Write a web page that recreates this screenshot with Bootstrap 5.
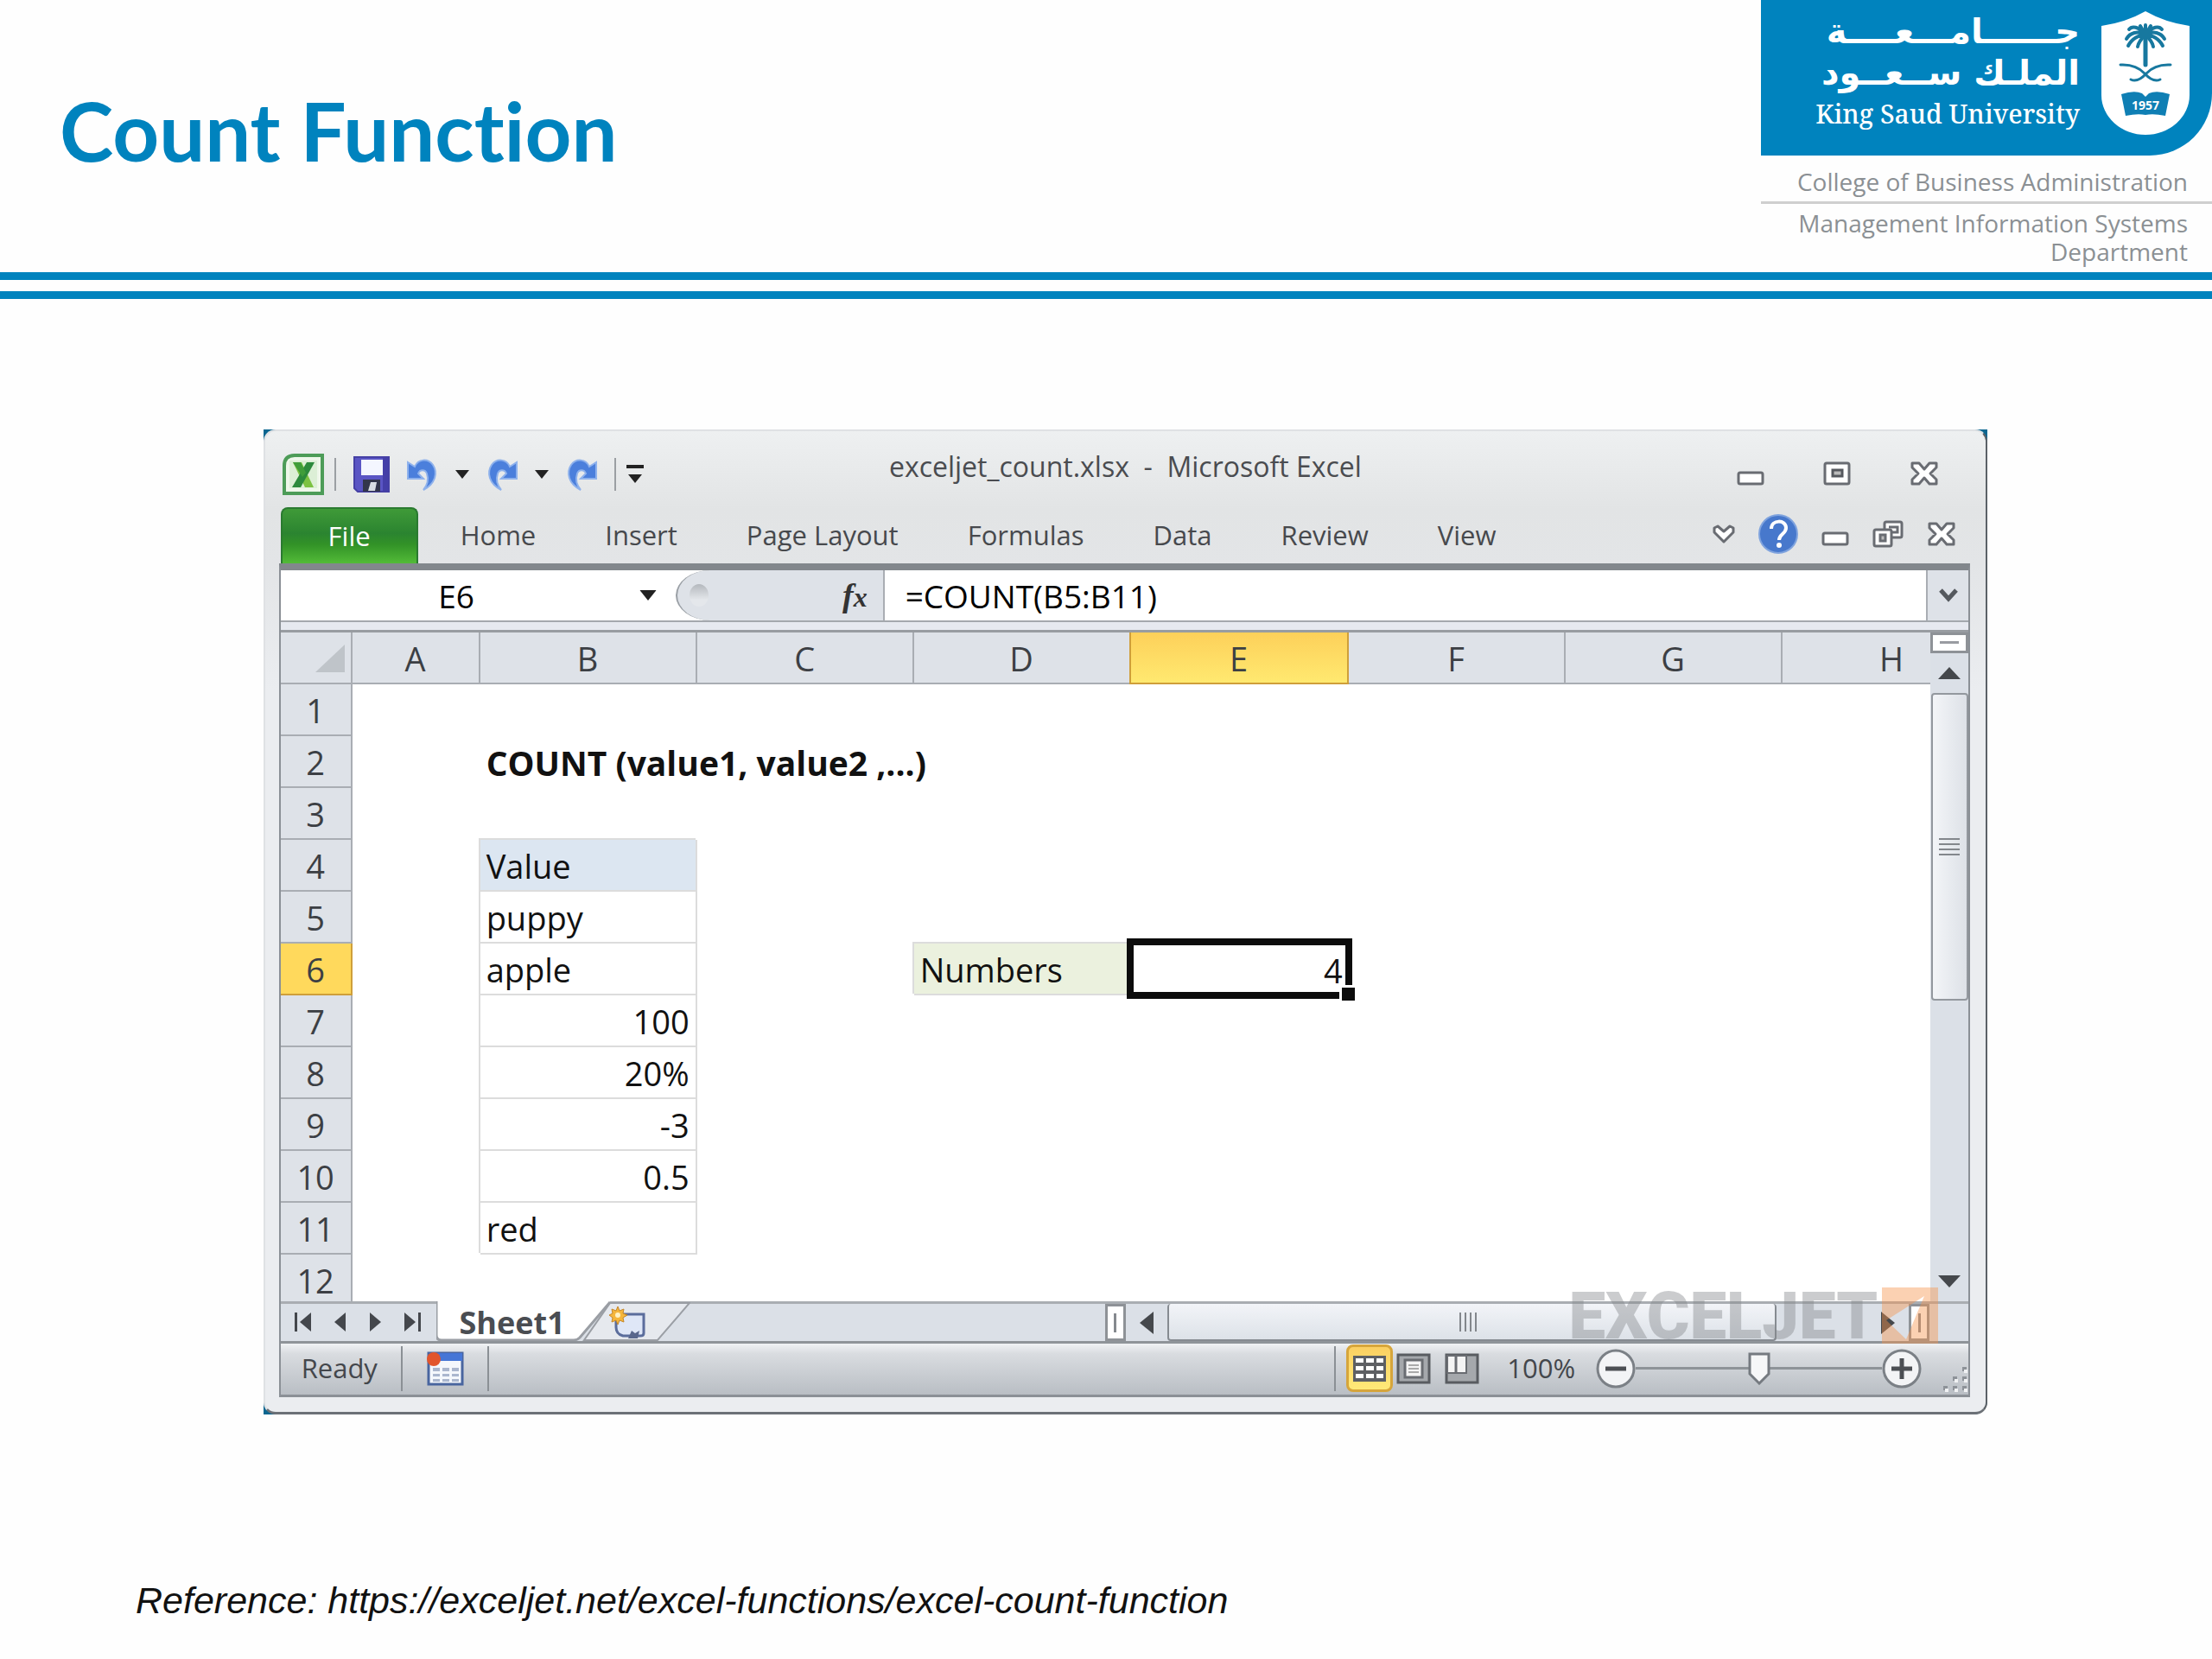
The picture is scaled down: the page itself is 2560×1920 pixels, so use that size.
<!DOCTYPE html>
<html lang="en">
  <head>
    <meta charset="utf-8">
    <meta name="viewport" content="width=device-width, initial-scale=1">
    <title>Count Function</title>
    <link href="https://cdn.jsdelivr.net/npm/bootstrap@5.3.3/dist/css/bootstrap.min.css" rel="stylesheet">
    <style>
      :root {
        --ksu-blue: #0083be;
        --head-bg: #dee2e8;
        --line: #a9adb3;
      }
      body {
        font-family: "Open Sans", "Noto Sans", sans-serif;
        background: #fefefe;
        color: #111;
      }

      /* slide header */
      .slide-title {
        font-family: Lato, sans-serif;
        font-weight: 700;
        font-size: 94px;
        line-height: 112px;
        font-variant-ligatures: none;
        color: var(--ksu-blue);
        padding: 95px 0 0 69px;
      }
      .slide-head { height: 315px; }
      .double-rule {
        height: 31px;
        border-top: 9px solid var(--ksu-blue);
        border-bottom: 9px solid var(--ksu-blue);
      }
      .uni-brand { width: 522px; }
      .uni-block {
        height: 180px;
        background: var(--ksu-blue);
        border-bottom-right-radius: 72px;
        padding: 12px 26px 0 0;
        gap: 25px;
      }
      .uni-arabic {
        font-family: "DejaVu Sans", sans-serif;
        font-weight: 700;
        font-size: 40px;
        line-height: 48px;
        white-space: nowrap;
      }
      .uni-name {
        font-family: "Noto Serif", "Liberation Serif", serif;
        font-weight: 500;
        font-size: 30px;
        line-height: 40px;
        margin-top: 4px;
      }
      .uni-unit {
        font-size: 28px;
        font-weight: 500;
        line-height: 33px;
        color: #8b9094;
        padding: 14px 28px 6px 0;
      }
      .uni-unit + .uni-unit { border-top: 3px solid #cfcfcf; padding-top: 6px; }

      /* Excel window */
      .slide-main { padding: 151px 10.15% 0 11.9%; }
      .win-back {
        background: #0b6690;
        border-bottom-right-radius: 16px;
      }
      .win {
        position: relative;
        background: linear-gradient(#eef0f1, #e2e4e5 90px, #e3e5e7 155px, #ebedf0 300px);
        border: 2px solid #dfe1e4;
        border-right-color: #5b6167;
        border-bottom: 3px solid #6c7177;
        border-radius: 14px;
        padding: 0 18px 17px;
      }
      .flat-btn {
        display: inline-flex;
        align-items: center;
        justify-content: center;
        padding: 0;
        border: 0;
        background: transparent;
      }
      .title-row {
        display: grid;
        grid-template-columns: 1fr auto 1fr;
        height: 88px;
      }
      .quick-bar { padding: 12px 0 0 2px; gap: 20px; }
      .quick-group { gap: 12px; }
      .v-sep { width: 2px; height: 38px; background: #9b9fa3; }
      .win-title { font-size: 32px; line-height: 82px; color: #4a4c50; white-space: pre; }
      .win-btns { padding: 10px 36px 0 0; gap: 68px; }
      .ribbon { height: 65px; font-size: 31px; }
      .ribbon .nav-link { color: #47494d; padding: 0 40px; line-height: 65px; }
      .ribbon .file-tab {
        color: #fff;
        width: 159px;
        padding: 0;
        margin-right: 9px;
        text-align: center;
        border: 2px solid #2a7a30;
        border-bottom: 0;
        border-radius: 8px 8px 0 0;
        background: linear-gradient(#3f9a38, #2b8430 45%, #329227 65%, #53bb38);
        line-height: 63px;
      }
      .ribbon-tools { gap: 27px; padding: 0 16px 4px 0; }
      .win-body {
        border: 2px solid #8b9096;
        border-top: 8px solid #82878c;
        border-bottom-width: 3px;
        margin-left: -2px;
      }

      /* formula bar */
      .formula-row { height: 58px; background: var(--head-bg); }
      .formula-row input {
        font-size: 37px;
        line-height: 56px;
        border: 0;
        padding: 2px 0 0;
        background: #fff;
        outline: 0;
        min-width: 0;
      }
      .name-box { width: 407px; text-align: center; }
      .name-wrap { width: 508px; background: #fff; }
      .fx-pill {
        width: 242px;
        margin-left: -51px;
        border-left: 2px solid #9a9fa5;
        border-right: 2px solid var(--line);
        border-radius: 40px 0 0 40px / 29px 0 0 29px;
        background: var(--head-bg);
        padding: 0 18px 0 14px;
      }
      .fx-dot {
        width: 22px;
        height: 26px;
        border-radius: 50%;
        background: linear-gradient(#b4b8bd, #e4e7eb 70%);
      }
      .fx-mark {
        font-family: "Liberation Serif", serif;
        font-style: italic;
        font-weight: 700;
        font-size: 38px;
        line-height: 40px;
        color: #333;
      }
      .fx-mark sub { font-size: 32px; bottom: 0; }
      .formula-row .formula-box { padding-left: 24px; }
      .more-btn { width: 49px; border-left: 2px solid var(--line); }
      .split-band {
        height: 14px;
        background: #e6e9f0;
        border-top: 2px solid #a4a8ae;
        border-bottom: 3px solid #989ca1;
      }

      /* grid */
      .sheet-grid {
        table-layout: fixed;
        border-collapse: separate;
        border-spacing: 0;
        width: 100%;
        background: #fff;
        font-size: 38px;
        line-height: 40px;
      }
      .sheet-grid tr { height: 60px; }
      .sheet-grid tbody tr:last-child { height: 54px; }
      .sheet-grid th, .sheet-grid td { padding: 2px 7px 0; vertical-align: middle; white-space: nowrap; }
      .sheet-grid th {
        background: var(--head-bg);
        color: #3c3f44;
        font-weight: 400;
        text-align: center;
        border-right: 2px solid var(--line);
        border-bottom: 2px solid var(--line);
      }
      .sheet-grid tbody tr:last-child th { border-bottom: 0; padding-top: 6px; }
      .sheet-grid thead th:last-child { border-right: 0; padding-left: 88px; }
      .sheet-grid .picked { background: #ffd95c; border-color: #cf9f3a; }
      .sheet-grid thead .picked {
        background: linear-gradient(#fdd05a, #ffe970);
        box-shadow: -2px 0 0 #cf9f3a;
      }
      .sheet-grid .boxed {
        border-right: 2px solid #dcdcdc;
        border-bottom: 2px solid #dcdcdc;
        box-shadow: -2px -2px 0 #dcdcdc;
      }
      .sheet-grid .formula-note { font-weight: 700; font-size: 39px; }
      .sheet-grid .fill-blue { background: #dce6f1; }
      .sheet-grid .fill-green { background: #ebf1de; }
      .cursor-cell { position: relative; }
      .cursor-cell::before {
        content: "";
        position: absolute;
        inset: -6px -4px -4px -5px;
        border: 8px solid #0c0c0c;
      }
      .cursor-cell::after {
        content: "";
        position: absolute;
        right: -7px;
        bottom: -6px;
        width: 15px;
        height: 15px;
        background: #0c0c0c;
        box-shadow: 0 0 0 3px #fff;
      }
      .v-scroll { width: 49px; background: #dbe0e7; }
      .v-scroll .split-box { width: 44px; height: 24px; }
      .split-box { border: 3px solid #8e9297; background: #fff; }
      .v-thumb {
        height: 356px;
        width: 43px;
        border: 2px solid #93989e;
        border-radius: 4px;
        background: linear-gradient(90deg, #f3f5f8, #dde1e7);
      }

      /* sheet tabs and horizontal scroll */
      .tab-row {
        height: 49px;
        background: #dbe0e7;
        border-top: 3px solid #a9adb2;
        border-bottom: 3px solid #8f9499;
      }
      .tab-nav { width: 180px; padding: 0 18px 2px 16px; }
      .tab-strip { position: relative; width: 294px; }
      .tab-strip > svg { position: absolute; left: 0; top: -3px; }
      .tab-strip .flat-btn { position: relative; }
      .sheet-name { font-weight: 700; font-size: 36px; line-height: 40px; color: #4a4d52; width: 176px; }
      .tab-row .split-box { width: 24px; height: 43px; }
      .h-arrow { width: 48px; }
      .h-thumb {
        width: 87%;
        height: 43px;
        border: 2px solid #868b91;
        border-top: 0;
        border-radius: 4px;
        background: linear-gradient(#f2f4f8, #dde2e8);
      }
      .scroll-corner { width: 45px; }

      /* status bar */
      .status-row {
        height: 59px;
        background: linear-gradient(#f0f2f4, #d9dce0 20%, #b9bec4);
        font-size: 31px;
        color: #44474c;
        padding-bottom: 2px;
      }
      .status-left { gap: 27px; }
      .status-row .v-sep { height: 52px; background: #8b9095; }
      .view-on {
        width: 54px;
        height: 55px;
        border: 3px solid #d6a53b;
        border-radius: 8px;
        background: linear-gradient(#fbd062, #ffe978);
      }
      .zoom-range {
        appearance: none;
        -webkit-appearance: none;
        width: 285px;
        height: 40px;
        margin: 0;
        background: linear-gradient(#8e9398, #8e9398) center / 100% 3px no-repeat;
      }
      .zoom-range::-webkit-slider-thumb {
        -webkit-appearance: none;
        width: 26px;
        height: 38px;
        border: 0;
        background: url("data:image/svg+xml,%3Csvg xmlns='http://www.w3.org/2000/svg' viewBox='0 0 26 38'%3E%3Cpath d='M2 2h22v23l-11 11l-11-11z' fill='%23f6f7f8' stroke='%23757a80' stroke-width='3'/%3E%3C/svg%3E") no-repeat;
      }
      .stamp {
        position: absolute;
        right: 55px;
        bottom: 78px;
        gap: 5px;
        opacity: .42;
        pointer-events: none;
      }
      .stamp-text {
        font-family: Roboto, sans-serif;
        font-weight: 900;
        font-size: 76px;
        line-height: 66px;
        color: #85888c;
      }

      .source-line {
        font-family: "Liberation Sans", Arial, sans-serif;
        font-style: italic;
        font-size: 43px;
        line-height: 50px;
        color: #111;
        padding: 190px 0 42px 157px;
      }
    </style>
  </head>
  <body>
    <!-- shared icons -->
    <svg class="d-none" aria-hidden="true">
      <symbol id="i-redo" viewBox="0 0 36 40">
        <path d="M17 38C3 31 0 18 6 9c6-8 17-7 21 2l8-5v19H17l6-6c-2-5-8-5-10 0-2 6-1 13 4 19z" fill="#4b7fdc" stroke="#8fb2ec" stroke-width="2"/>
      </symbol>
      <symbol id="i-caret" viewBox="0 0 16 10"><path d="M0 0h16l-8 10z" fill="#222"/></symbol>
      <symbol id="i-min" viewBox="0 0 32 28"><rect x="2" y="13" width="28" height="13" rx="2" fill="#fff" stroke="#696c72" stroke-width="3"/></symbol>
      <symbol id="i-close" viewBox="0 0 34 28">
        <path d="M3 2h8l6 7 6-7h8v5l-7 7 7 7v5h-8l-6-7-6 7H3v-5l7-7-7-7z" fill="#fff" stroke="#696c72" stroke-width="3" stroke-linejoin="round"/>
      </symbol>
    </svg>

    <header>
      <div class="slide-head d-flex justify-content-between">
        <h1 class="slide-title m-0">Count Function</h1>
        <div class="uni-brand text-end">
          <div class="uni-block d-flex justify-content-end text-white">
            <div>
              <div class="uni-arabic" lang="ar" dir="rtl">جــــــامـــعــــة<br>الملـك ســعــود</div>
              <div class="uni-name">King Saud University</div>
            </div>
            <svg width="102" height="144" viewBox="0 0 102 144" role="img" aria-label="University emblem">
              <path d="M0 18Q28 14 51 1Q74 14 102 18V98A51 46 0 0 1 0 98z" fill="#fff"/>
              <g fill="none" stroke="#17789f" stroke-width="3" stroke-linecap="round">
                <path d="M51 26V63" stroke-width="5"/>
                <path d="M51 28C43 18 35 18 32 22M51 28C59 18 67 18 70 22M51 28C42 23 33 26 29 33M51 28C60 23 69 26 73 33M51 28C44 28 35 33 31 41M51 28C58 28 67 33 71 41M51 28C47 32 43 36 42 42M51 28C55 32 59 36 60 42M51 28V17M51 28L45 18M51 28L57 18" stroke-width="4"/>
                <path d="M22 63Q40 62 50 73T68 80M80 63Q62 62 52 73T34 80"/>
              </g>
              <path d="M23 97Q38 92 47 96L51 100L55 96Q64 92 79 97L74 122Q60 119 51 121Q42 119 28 122z" fill="#0f7fb4"/>
              <text x="51" y="115" text-anchor="middle" font-family="Open Sans, sans-serif" font-size="14" font-weight="700" fill="#fff">1957</text>
            </svg>
          </div>
          <div class="uni-unit">College of Business Administration</div>
          <div class="uni-unit">Management Information Systems<br>Department</div>
        </div>
      </div>
      <div class="double-rule"></div>
    </header>

    <main class="slide-main">
      <div class="win-back">
        <div class="win">
          <div class="title-row">
            <div class="quick-bar d-flex align-items-center">
              <div class="quick-group d-flex align-items-center">
                <svg width="48" height="48" viewBox="0 0 48 48">
                  <path d="M14 2H46V46H2V14Q2 2 14 2z" fill="#eef7ea" stroke="#4d9c58" stroke-width="4"/>
                  <rect x="8" y="8" width="32" height="32" fill="#dcefd6"/>
                  <path d="M12 10h10l14 29H26z" fill="#7cc242"/>
                  <path d="M28 10h9L21 39H11z" fill="#2c8a3c"/>
                  <path d="M12 10h9l6 12-4 5z" fill="#3f9d3a"/>
                </svg>
                <div class="v-sep"></div>
              </div>
              <button class="flat-btn" aria-label="Save">
                <svg width="42" height="42" viewBox="0 0 42 42">
                  <path d="M1 1h40v40H5l-4-4z" fill="#5a55c4" stroke="#4540a5" stroke-width="2"/>
                  <path d="M34 2h6v38h-6z" fill="#443fa8"/>
                  <rect x="9" y="4" width="25" height="18" fill="#f4f6ff"/>
                  <rect x="11" y="27" width="20" height="14" fill="#33364c"/>
                  <path d="M17 40l3-10h7l-2 10z" fill="#d9dde4"/>
                </svg>
              </button>
              <button class="flat-btn" aria-label="Undo">
                <svg width="36" height="40"><use href="#i-redo" transform="translate(36 0) scale(-1 1)" width="36" height="40"/></svg>
              </button>
              <button class="flat-btn" aria-label="Undo list"><svg width="16" height="10"><use href="#i-caret"/></svg></button>
              <button class="flat-btn" aria-label="Redo"><svg width="36" height="40"><use href="#i-redo"/></svg></button>
              <button class="flat-btn" aria-label="Redo list"><svg width="16" height="10"><use href="#i-caret"/></svg></button>
              <button class="flat-btn" aria-label="Repeat"><svg width="36" height="40"><use href="#i-redo"/></svg></button>
              <div class="quick-group d-flex align-items-center">
                <div class="v-sep"></div>
                <button class="flat-btn" aria-label="Customize">
                  <svg width="20" height="22" viewBox="0 0 20 22"><path d="M0 0h20v4H0zM2 11h16l-8 10z" fill="#222"/></svg>
                </button>
              </div>
            </div>
            <div class="win-title">exceljet_count.xlsx  -  Microsoft Excel</div>
            <div class="win-btns d-flex align-items-center justify-content-end">
              <button class="flat-btn" aria-label="Minimize"><svg width="32" height="28"><use href="#i-min"/></svg></button>
              <button class="flat-btn" aria-label="Maximize">
                <svg width="32" height="28" viewBox="0 0 32 28">
                  <rect x="2" y="2" width="28" height="24" rx="2" fill="#fff" stroke="#696c72" stroke-width="3"/>
                  <rect x="11" y="10" width="11" height="7" fill="#bbb" stroke="#55585e" stroke-width="3"/>
                </svg>
              </button>
              <button class="flat-btn" aria-label="Close"><svg width="34" height="28"><use href="#i-close"/></svg></button>
            </div>
          </div>

          <div class="ribbon d-flex justify-content-between">
            <nav class="nav flex-nowrap">
              <a class="nav-link file-tab" href="#">File</a>
              <a class="nav-link" href="#">Home</a>
              <a class="nav-link" href="#">Insert</a>
              <a class="nav-link" href="#">Page Layout</a>
              <a class="nav-link" href="#">Formulas</a>
              <a class="nav-link" href="#">Data</a>
              <a class="nav-link" href="#">Review</a>
              <a class="nav-link" href="#">View</a>
            </nav>
            <div class="ribbon-tools d-flex align-items-center">
              <button class="flat-btn" aria-label="Collapse ribbon">
                <svg width="26" height="22" viewBox="0 0 26 22"><path d="M2 4l4-2 7 6 7-6 4 2v5L13 20 2 9z" fill="#fff" stroke="#696c72" stroke-width="3" stroke-linejoin="round"/></svg>
              </button>
              <button class="flat-btn" aria-label="Help">
                <svg width="46" height="46" viewBox="0 0 46 46">
                  <circle cx="23" cy="23" r="22" fill="#4778cc" stroke="#7fa3de" stroke-width="2"/>
                  <path d="M15 17c0-11 17-11 17-1 0 7-8 7-8 14" fill="none" stroke="#fff" stroke-width="4"/>
                  <circle cx="24" cy="36" r="3" fill="#fff"/>
                </svg>
              </button>
              <button class="flat-btn" aria-label="Minimize workbook"><svg width="32" height="28"><use href="#i-min"/></svg></button>
              <button class="flat-btn" aria-label="Restore workbook">
                <svg width="36" height="32" viewBox="0 0 36 32">
                  <rect x="14" y="2" width="20" height="18" rx="2" fill="#fff" stroke="#696c72" stroke-width="3"/>
                  <path d="M19 8h10v6h-6" fill="none" stroke="#696c72" stroke-width="3"/>
                  <rect x="2" y="11" width="20" height="19" rx="2" fill="#fff" stroke="#696c72" stroke-width="3"/>
                  <rect x="9" y="17" width="6" height="7" fill="#bbb" stroke="#696c72" stroke-width="3"/>
                </svg>
              </button>
              <button class="flat-btn" aria-label="Close workbook"><svg width="34" height="28"><use href="#i-close"/></svg></button>
            </div>
          </div>

          <div class="win-body">
            <div class="formula-row d-flex">
              <div class="name-wrap d-flex">
                <input class="name-box" type="text" value="E6" aria-label="Name box">
                <button class="flat-btn ps-2" aria-label="Names"><svg width="20" height="12" viewBox="0 0 16 10"><use href="#i-caret"/></svg></button>
              </div>
              <div class="fx-pill d-flex align-items-center justify-content-between">
                <span class="fx-dot"></span>
                <span class="fx-mark">f<sub>x</sub></span>
              </div>
              <input class="formula-box flex-grow-1" type="text" value="=COUNT(B5:B11)" aria-label="Formula">
              <button class="flat-btn more-btn" aria-label="Expand formula bar">
                <svg width="22" height="16" viewBox="0 0 22 16"><path d="M2 2l9 10 9-10" fill="none" stroke="#55595e" stroke-width="5"/></svg>
              </button>
            </div>
            <div class="split-band"></div>

            <div class="d-flex">
              <div class="flex-grow-1">
                <table class="sheet-grid">
                  <colgroup>
                    <col style="width: 83px"><col style="width: 148px"><col style="width: 251px"><col style="width: 251px">
                    <col style="width: 251px"><col style="width: 252px"><col style="width: 251px"><col style="width: 251px"><col>
                  </colgroup>
                  <thead>
                    <tr>
                      <th class="text-end"><svg class="d-block ms-auto" width="34" height="32" viewBox="0 0 34 32"><path d="M34 0v32H0z" fill="#bfc4c9"/></svg></th>
                      <th>A</th><th>B</th><th>C</th><th>D</th><th class="picked">E</th><th>F</th><th>G</th><th>H</th>
                    </tr>
                  </thead>
                  <tbody>
                    <tr><th>1</th><td></td><td></td><td></td><td></td><td></td><td></td><td></td><td></td></tr>
                    <tr><th>2</th><td></td><td colspan="3" class="formula-note">COUNT (value1, value2 ,...)</td><td></td><td></td><td></td><td></td></tr>
                    <tr><th>3</th><td></td><td></td><td></td><td></td><td></td><td></td><td></td><td></td></tr>
                    <tr><th>4</th><td></td><td class="boxed fill-blue">Value</td><td></td><td></td><td></td><td></td><td></td><td></td></tr>
                    <tr><th>5</th><td></td><td class="boxed">puppy</td><td></td><td></td><td></td><td></td><td></td><td></td></tr>
                    <tr><th class="picked">6</th><td></td><td class="boxed">apple</td><td></td><td class="boxed fill-green">Numbers</td><td class="cursor-cell text-end">4</td><td></td><td></td><td></td></tr>
                    <tr><th>7</th><td></td><td class="boxed text-end">100</td><td></td><td></td><td></td><td></td><td></td><td></td></tr>
                    <tr><th>8</th><td></td><td class="boxed text-end">20%</td><td></td><td></td><td></td><td></td><td></td><td></td></tr>
                    <tr><th>9</th><td></td><td class="boxed text-end">-3</td><td></td><td></td><td></td><td></td><td></td><td></td></tr>
                    <tr><th>10</th><td></td><td class="boxed text-end">0.5</td><td></td><td></td><td></td><td></td><td></td><td></td></tr>
                    <tr><th>11</th><td></td><td class="boxed">red</td><td></td><td></td><td></td><td></td><td></td><td></td></tr>
                    <tr><th>12</th><td></td><td></td><td></td><td></td><td></td><td></td><td></td><td></td></tr>
                  </tbody>
                </table>
              </div>
              <div class="v-scroll d-flex flex-column align-items-center">
                <div class="split-box d-flex justify-content-center align-items-center">
                  <svg width="22" height="4"><path d="M0 0h22v3H0z" fill="#999ca1"/></svg>
                </div>
                <button class="flat-btn flex-shrink-0 py-3" aria-label="Scroll up"><svg width="26" height="14" viewBox="0 0 26 14"><path d="M0 14h26L13 0z" fill="#45484c"/></svg></button>
                <div class="v-thumb flex-shrink-0 d-flex align-items-center justify-content-center">
                  <svg width="24" height="20" viewBox="0 0 24 20"><path d="M0 1h24M0 7h24M0 13h24M0 19h24" stroke="#83878c" stroke-width="2"/></svg>
                </div>
                <button class="flat-btn mt-auto pb-3" aria-label="Scroll down"><svg width="26" height="14" viewBox="0 0 26 14"><path d="M0 0h26L13 14z" fill="#45484c"/></svg></button>
              </div>
            </div>

            <div class="tab-row d-flex">
              <div class="d-flex flex-grow-1">
                <div class="d-flex w-50">
                  <div class="tab-nav d-flex align-items-center justify-content-between">
                    <button class="flat-btn" aria-label="First sheet"><svg width="20" height="22" viewBox="0 0 20 22"><path d="M0 0h3v22H0zM19 0v22L6 11z" fill="#44474c"/></svg></button>
                    <button class="flat-btn" aria-label="Previous sheet"><svg width="14" height="22" viewBox="0 0 14 22"><path d="M13 0v22L0 11z" fill="#44474c"/></svg></button>
                    <button class="flat-btn" aria-label="Next sheet"><svg width="14" height="22" viewBox="0 0 14 22"><path d="M1 0v22l13-11z" fill="#44474c"/></svg></button>
                    <button class="flat-btn" aria-label="Last sheet"><svg width="20" height="22" viewBox="0 0 20 22"><path d="M17 0h3v22h-3zM1 0v22l13-11z" fill="#44474c"/></svg></button>
                  </div>
                  <div class="tab-strip d-flex align-items-center">
                    <svg width="294" height="46" viewBox="0 0 294 46">
                      <path d="M201 2H293L256 45H171z" fill="#e6e9ee" stroke="#9a9ea4" stroke-width="2"/>
                      <path d="M0 0H201L166 42Q163 45 159 45H6Q0 45 0 39z" fill="#fff"/>
                      <path d="M0 0V39Q0 45 6 45H159Q163 45 166 42L201 1" fill="none" stroke="#9a9ea4" stroke-width="3"/>
                    </svg>
                    <button class="flat-btn sheet-name">Sheet1</button>
                    <button class="flat-btn ms-4" aria-label="Insert sheet">
                      <svg width="42" height="38" viewBox="0 0 42 38">
                        <path d="M8 9h32v22q0 3-4 3H16q-8-2-8-10z" fill="#dfe7f7" stroke="#5b6d9c" stroke-width="3"/>
                        <path d="M22 37l4-9 4 3 5-3-2 9z" fill="#59678c"/>
                        <path d="M10 0l2 5 5-2-1 5 5 2-5 3 1 5-5-2-2 5-2-5-5 2 1-5-4-3 4-2-1-5 5 2z" fill="#f5b63c" stroke="#c5872a" stroke-width="1"/>
                        <circle cx="10" cy="10" r="3" fill="#fff2c4"/>
                      </svg>
                    </button>
                  </div>
                </div>
                <div class="d-flex w-50">
                  <div class="split-box d-flex justify-content-center align-items-center"><svg width="3" height="22"><path d="M0 0h3v22H0z" fill="#85898e"/></svg></div>
                  <button class="flat-btn h-arrow" aria-label="Scroll left"><svg width="16" height="26" viewBox="0 0 16 26"><path d="M16 0v26L0 13z" fill="#45484c"/></svg></button>
                  <div class="flex-grow-1">
                    <div class="h-thumb d-flex align-items-center">
                      <svg class="ms-auto" width="52%" height="22">
                        <path d="M1 0v22M7 0v22M13 0v22M19 0v22" stroke="#83878c" stroke-width="2"/>
                      </svg>
                    </div>
                  </div>
                  <button class="flat-btn h-arrow" aria-label="Scroll right"><svg width="16" height="26" viewBox="0 0 16 26"><path d="M0 0v26l16-13z" fill="#45484c"/></svg></button>
                  <div class="split-box d-flex justify-content-center align-items-center"><svg width="3" height="22"><path d="M0 0h3v22H0z" fill="#85898e"/></svg></div>
                </div>
              </div>
              <div class="scroll-corner"></div>
            </div>

            <div class="status-row d-flex align-items-center">
              <div class="status-left d-flex align-items-center ps-4">
                <span>Ready</span>
                <span class="v-sep"></span>
                <button class="flat-btn" aria-label="Record macro">
                  <svg width="44" height="40" viewBox="0 0 44 40">
                    <rect x="3" y="2" width="39" height="36" fill="#f4f7fc" stroke="#49659f" stroke-width="3"/>
                    <rect x="4" y="2" width="38" height="9" fill="#4676d6"/>
                    <path d="M8 19h8v4H8zM19 19h8v4h-8zM30 19h8v4h-8zM8 26h8v3H8zM19 26h8v3h-8zM30 26h8v3h-8zM8 32h8v3H8zM19 32h8v3h-8zM30 32h8v3h-8z" fill="#aab6ce"/>
                    <circle cx="9" cy="9" r="8" fill="#e2552c"/>
                  </svg>
                </button>
                <span class="v-sep"></span>
              </div>

              <span class="v-sep ms-auto me-2"></span>
              <button class="flat-btn view-on ms-1" aria-label="Normal view">
                <svg width="38" height="30" viewBox="0 0 38 30">
                  <rect width="38" height="30" fill="#5d5f63"/>
                  <path d="M3 3h9v5H3zM15 3h9v5h-9zM27 3h8v5h-8zM3 12h9v5H3zM15 12h9v5h-9zM27 12h8v5h-8zM3 21h9v5H3zM15 21h9v5h-9zM27 21h8v5h-8z" fill="#fff"/>
                </svg>
              </button>
              <button class="flat-btn ms-1" aria-label="Page layout view">
                <svg width="40" height="36" viewBox="0 0 40 36">
                  <rect x="2" y="2" width="36" height="32" fill="#a5a8ac" stroke="#595c61" stroke-width="3"/>
                  <rect x="10" y="8" width="20" height="20" fill="#f4f4f4" stroke="#6a6d72" stroke-width="3"/>
                  <path d="M14 14h12M14 18h12M14 22h12" stroke="#aaa" stroke-width="2"/>
                </svg>
              </button>
              <button class="flat-btn ms-3" aria-label="Page break view">
                <svg width="40" height="36" viewBox="0 0 40 36">
                  <rect x="2" y="2" width="36" height="32" fill="#a5a8ac" stroke="#595c61" stroke-width="3"/>
                  <path d="M3 3h22v20H3z" fill="#f4f4f4" stroke="#6a6d72" stroke-width="2"/>
                  <path d="M13 3v20" stroke="#6a6d72" stroke-width="3"/>
                </svg>
              </button>
              <label class="ms-4 ps-2" for="zoom">100%</label>
              <button class="flat-btn ms-4" aria-label="Zoom out">
                <svg width="46" height="46" viewBox="0 0 46 46"><circle cx="23" cy="23" r="21" fill="#f3f4f6" stroke="#7b8086" stroke-width="3"/><path d="M11 23h24" stroke="#4c4f54" stroke-width="5"/></svg>
              </button>
              <input class="zoom-range" id="zoom" type="range" min="0" max="200" value="100">
              <button class="flat-btn" aria-label="Zoom in">
                <svg width="46" height="46" viewBox="0 0 46 46"><circle cx="23" cy="23" r="21" fill="#f3f4f6" stroke="#7b8086" stroke-width="3"/><path d="M11 23h24M23 11v24" stroke="#4c4f54" stroke-width="5"/></svg>
              </button>
              <svg class="ms-4 align-self-end" width="30" height="34" viewBox="0 0 30 34">
                <path d="M23 4h5v5h-5zM12 15h5v5h-5zM23 15h5v5h-5zM1 26h5v5H1zM12 26h5v5h-5zM23 26h5v5h-5z" fill="#8d9298"/>
                <path d="M25 7h4v4h-4zM14 18h4v4h-4zM25 18h4v4h-4zM3 29h4v4H3zM14 29h4v4h-4zM25 29h4v4h-4z" fill="#f0f1f3"/>
              </svg>
            </div>
          </div>

          <div class="stamp d-flex" aria-hidden="true">
            <span class="stamp-text">EXCELJET</span>
            <svg width="65" height="65" viewBox="0 0 65 65">
              <path d="M0 0H65V65H0zM5 38L28 60L49 10z" fill="#f7924a" fill-rule="evenodd"/>
            </svg>
          </div>
        </div>
      </div>
    </main>

    <footer class="source-line">Reference: https://exceljet.net/excel-functions/excel-count-function</footer>

    <script src="https://cdn.jsdelivr.net/npm/bootstrap@5.3.3/dist/js/bootstrap.bundle.min.js"></script>
  </body>
</html>
